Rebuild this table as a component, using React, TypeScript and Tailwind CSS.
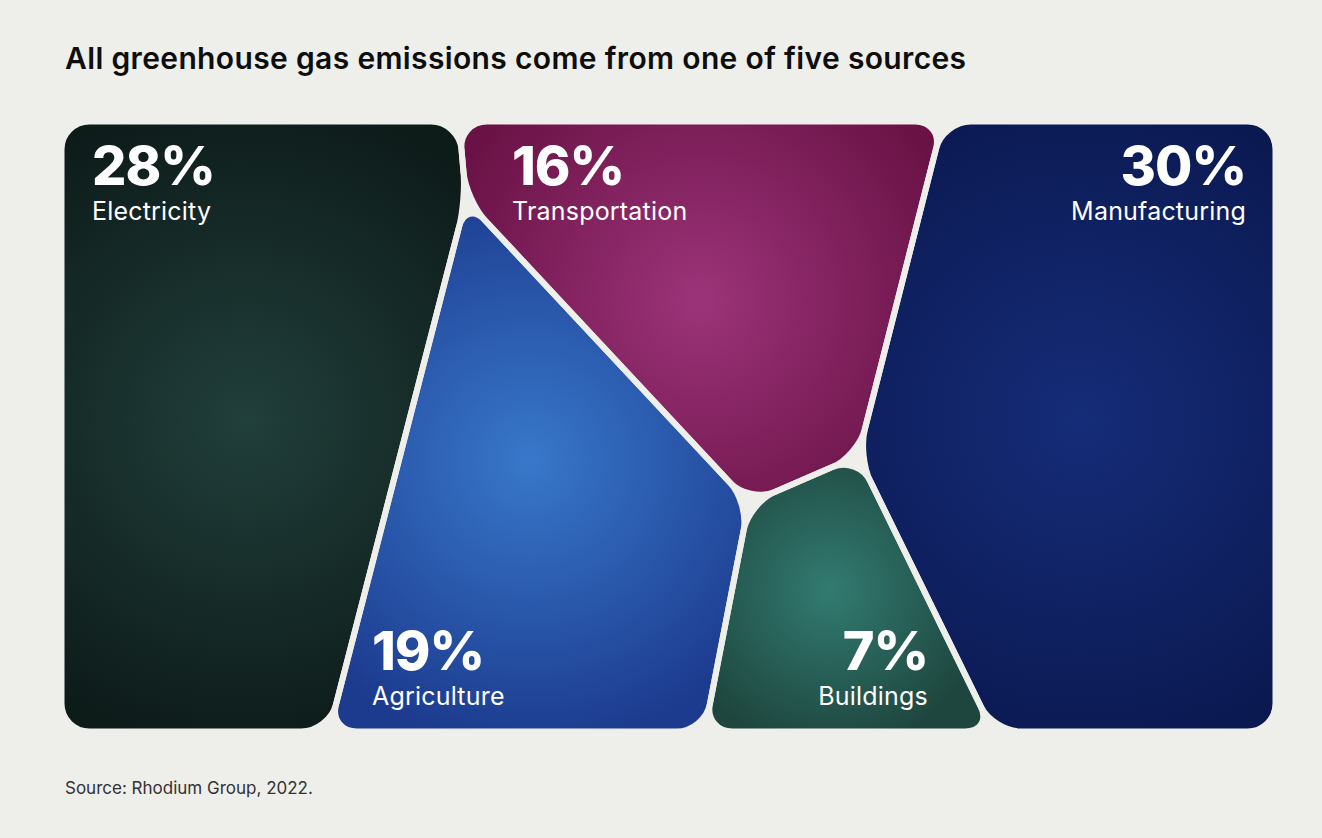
type Pt = [number, number]

const BG = "#eeeeea"

// gap centre-lines of the voronoi layout, in page coordinates
const V1: Pt = [459, 121.5]
const V2: Pt = [466, 200]
const V3: Pt = [329, 731.5]
const V4: Pt = [749, 503]
const V5: Pt = [858, 456]
const V6: Pt = [943, 121.5]
const V7: Pt = [704.5, 731.5]
const V8: Pt = [993, 731.5]

const cells = [
  {
    id: "electricity",
    pts: [[61.5, 121.5], V1, V2, V3, [61.5, 731.5]] as Pt[],
    inner: "#213f3b",
    outer: "#0d1b19",
    c: [245, 420, 330],
  },
  {
    id: "transportation",
    pts: [V1, V6, V5, V4, V2] as Pt[],
    inner: "#9c3479",
    outer: "#6a1246",
    c: [700, 300, 270],
  },
  {
    id: "agriculture",
    pts: [V2, V4, V7, V3] as Pt[],
    inner: "#3878ca",
    outer: "#1c3a8e",
    c: [530, 460, 290],
  },
  {
    id: "buildings",
    pts: [V4, V5, V8, V7] as Pt[],
    inner: "#327b71",
    outer: "#1e463e",
    c: [830, 590, 160],
  },
  {
    id: "manufacturing",
    pts: [V6, [1275.5, 121.5], [1275.5, 731.5], V8, V5] as Pt[],
    inner: "#152c78",
    outer: "#0b1951",
    c: [1080, 420, 340],
  },
]

function rounded(pts: Pt[], r: number) {
  const n = pts.length
  const k = 0.5523
  let d = ""
  for (let i = 0; i < n; i++) {
    const prev = pts[(i - 1 + n) % n]
    const cur = pts[i]
    const next = pts[(i + 1) % n]
    const la = Math.hypot(prev[0] - cur[0], prev[1] - cur[1])
    const lb = Math.hypot(next[0] - cur[0], next[1] - cur[1])
    const cut = Math.min(r, la / 2, lb / 2)
    const a: Pt = [cur[0] + ((prev[0] - cur[0]) / la) * cut, cur[1] + ((prev[1] - cur[1]) / la) * cut]
    const b: Pt = [cur[0] + ((next[0] - cur[0]) / lb) * cut, cur[1] + ((next[1] - cur[1]) / lb) * cut]
    const c1: Pt = [a[0] + (cur[0] - a[0]) * k, a[1] + (cur[1] - a[1]) * k]
    const c2: Pt = [b[0] + (cur[0] - b[0]) * k, b[1] + (cur[1] - b[1]) * k]
    d += `${i === 0 ? "M" : "L"}${a[0].toFixed(1)} ${a[1].toFixed(1)} `
    d += `C${c1[0].toFixed(1)} ${c1[1].toFixed(1)} ${c2[0].toFixed(1)} ${c2[1].toFixed(1)} ${b[0].toFixed(1)} ${b[1].toFixed(1)} `
  }
  return d + "Z"
}

function Label({ pct, name, className, right }: { pct: string; name: string; className: string; right?: boolean }) {
  return (
    <div className={`absolute flex flex-col text-white ${right ? "items-end" : "items-start"} ${className}`}>
      <span className="text-[54px] leading-[52px] font-extrabold tracking-[-1px]">{pct}</span>
      <span className="mt-[6px] text-[25px] leading-[26px] font-normal tracking-[0.2px]">{name}</span>
    </div>
  )
}

export default function App() {
  return (
    <div
      className="w-full h-[838px] bg-[#eeeeea] pt-[40px] pl-[58px] flex flex-col"
      style={{ fontFamily: "Inter, 'Noto Sans', sans-serif" }}
    >
      <h1 className="pl-[7px] text-[30px] leading-[36px] font-semibold text-[#0e0e0e] tracking-[0.35px]">
        All greenhouse gas emissions come from one of five sources
      </h1>

      <div className="relative mt-[42px] w-[1222px] h-[617px]">
        <svg className="absolute inset-0" width="1222" height="617" viewBox="58 118 1222 617">
          <defs>
            {cells.map((cell) => (
              <radialGradient
                key={cell.id}
                id={`g-${cell.id}`}
                gradientUnits="userSpaceOnUse"
                cx={cell.c[0]}
                cy={cell.c[1]}
                r={cell.c[2]}
              >
                <stop offset="0" stopColor={cell.inner} />
                <stop offset="1" stopColor={cell.outer} />
              </radialGradient>
            ))}
          </defs>
          {cells.map((cell) => (
            <path key={cell.id} d={rounded(cell.pts, 28)} fill={`url(#g-${cell.id})`} />
          ))}
          {cells.map((cell) => (
            <path
              key={cell.id}
              d={rounded(cell.pts, 28)}
              fill="none"
              stroke={BG}
              strokeWidth={6}
              strokeLinejoin="round"
            />
          ))}
        </svg>

        <Label pct="28%" name="Electricity" className="left-[34px] top-[22px]" />
        <Label pct="16%" name="Transportation" className="left-[454px] top-[22px]" />
        <Label pct="30%" name="Manufacturing" className="right-[34px] top-[22px]" right />
        <Label pct="19%" name="Agriculture" className="left-[314px] top-[507px]" />
        <Label pct="7%" name="Buildings" className="right-[352px] top-[507px]" right />
      </div>

      <p className="pl-[7px] mt-[43px] text-[17px] leading-[20px] text-[#333333]">Source: Rhodium Group, 2022.</p>
    </div>
  )
}
